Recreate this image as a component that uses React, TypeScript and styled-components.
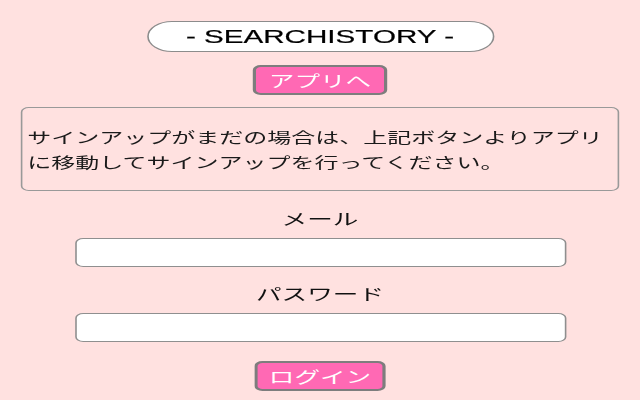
import styled, { createGlobalStyle } from "styled-components";

const GlobalStyle = createGlobalStyle`
  html, body {
    margin: 0;
    padding: 0;
    background: #ffe1e0;
    overflow: hidden;
  }
  * {
    box-sizing: border-box;
  }
`;

// the screen is drawn at 400px wide and stretched to the 640px window
const Stage = styled.div`
  width: 400px;
  height: 400px;
  transform: scaleX(1.6);
  transform-origin: 0 0;
  display: flex;
  flex-direction: column;
  align-items: center;
  padding-top: 21px;
  font-family: "Noto Sans CJK JP", "Noto Sans", sans-serif;
  color: #111;
`;

const TitlePill = styled.h1`
  margin: 0;
  width: 217px;
  height: 31px;
  display: flex;
  align-items: center;
  justify-content: center;
  background: #fff;
  border: 1.5px solid #8c8c8c;
  border-radius: 16px;
  font-family: "Liberation Sans", Arial, sans-serif;
  font-weight: normal;
  font-size: 18.5px;
  color: #000;
  -webkit-text-stroke: 0.2px #000;
`;

const PinkButton = styled.button<{ $width: number; $gap: number }>`
  margin-top: ${(p) => p.$gap}px;
  width: ${(p) => p.$width}px;
  height: 30px;
  padding: 0;
  display: flex;
  align-items: center;
  justify-content: center;
  background: #ff69b4;
  border: 2px solid #7d7d7d;
  border-radius: 5px;
  color: #fff;
  font-family: "Noto Sans CJK JP", sans-serif;
  font-size: 16px;
  line-height: 1;
  cursor: pointer;
`;

const NoticeBox = styled.div`
  margin-top: 12px;
  width: 374px;
  height: 84px;
  padding: 16px 3px 0;
  border: 1.5px solid #999;
  border-radius: 5px;
  font-size: 15px;
  line-height: 25px;
  color: #1a1a1a;
`;

const NoticeText = styled.p`
  margin: 0;
`;

const FieldLabel = styled.label<{ $gap: number }>`
  margin-top: ${(p) => p.$gap}px;
  font-size: 16px;
  line-height: 20px;
  color: #111;
`;

const TextField = styled.input`
  margin-top: 10px;
  width: 307px;
  height: 29px;
  padding: 0 6px;
  background: #fff;
  border: 1.5px solid #8f8f8f;
  border-radius: 5px;
  font-size: 14px;
  outline: none;
`;

export default function App() {
  return (
    <>
      <GlobalStyle />
      <Stage>
        <TitlePill>- SEARCHISTORY -</TitlePill>
        <PinkButton $width={84} $gap={13}>アプリへ</PinkButton>
        <NoticeBox>
          <NoticeText>
            サインアップがまだの場合は、上記ボタンよりアプリに移動してサインアップを行ってください。
          </NoticeText>
        </NoticeBox>
        <FieldLabel $gap={17} htmlFor="mail">メール</FieldLabel>
        <TextField id="mail" type="email" />
        <FieldLabel $gap={16} htmlFor="pass">パスワード</FieldLabel>
        <TextField id="pass" type="password" />
        <PinkButton $width={82} $gap={19}>ログイン</PinkButton>
      </Stage>
    </>
  );
}
